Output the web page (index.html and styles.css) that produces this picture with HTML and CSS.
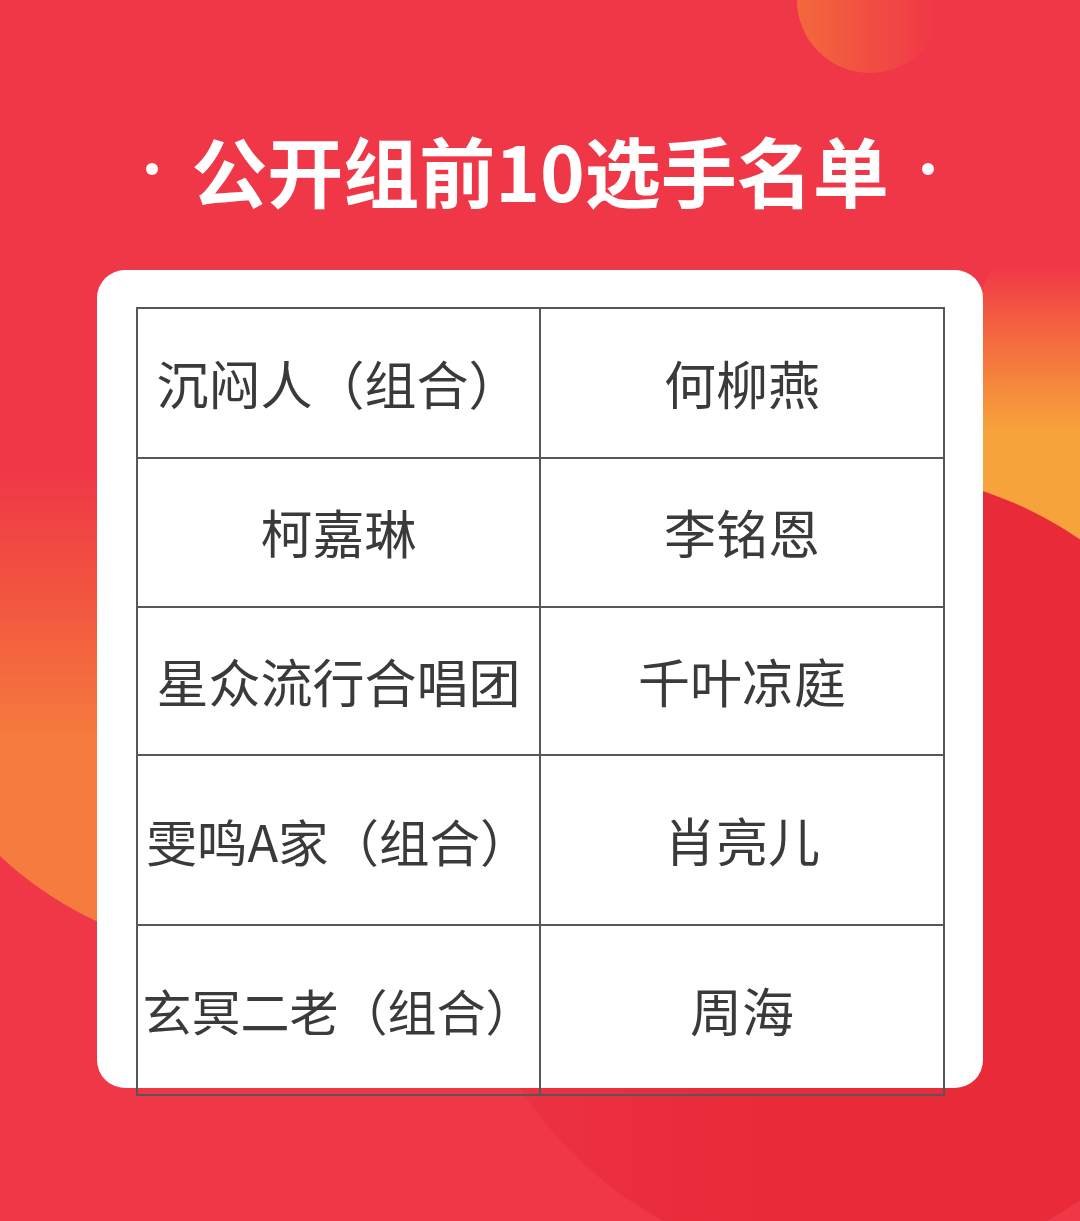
FILE: index.html
```html
<!DOCTYPE html>
<html lang="zh-CN">
<head>
<meta charset="utf-8">
<title>公开组前10选手名单</title>
<link rel="stylesheet" href="styles.css">
</head>
<body>
<div class="page">
  <svg class="bg" width="1080" height="1221" viewBox="0 0 1080 1221" xmlns="http://www.w3.org/2000/svg">
    <defs>
      <linearGradient id="gTop" gradientUnits="userSpaceOnUse" x1="797" y1="0" x2="935" y2="0">
        <stop offset="0" stop-color="#f3683c"/>
        <stop offset="1" stop-color="#f03747"/>
      </linearGradient>
      <linearGradient id="gRight" gradientUnits="userSpaceOnUse" x1="0" y1="265" x2="0" y2="430">
        <stop offset="0" stop-color="#f03747"/>
        <stop offset="0.45" stop-color="#f46a3f"/>
        <stop offset="1" stop-color="#f7a33b"/>
      </linearGradient>
      <linearGradient id="gLeft" gradientUnits="userSpaceOnUse" x1="0" y1="470" x2="0" y2="740">
        <stop offset="0" stop-color="#f03747"/>
        <stop offset="0.5" stop-color="#f2573f"/>
        <stop offset="1" stop-color="#f57c3e"/>
      </linearGradient>
      <linearGradient id="gDark" gradientUnits="userSpaceOnUse" x1="455" y1="0" x2="760" y2="0">
        <stop offset="0" stop-color="#ed3342"/>
        <stop offset="1" stop-color="#e82a39"/>
      </linearGradient>
    </defs>
    <rect width="1080" height="1221" fill="#f03747"/>
    <circle cx="870" cy="0" r="73" fill="url(#gTop)"/>
    <circle cx="1320" cy="440" r="370" fill="url(#gRight)"/>
    <circle cx="250" cy="590" r="365" fill="url(#gLeft)"/>
    <circle cx="855" cy="870" r="400" fill="url(#gDark)"/>
  </svg>

  <div class="content">
    <header class="title">
      <span class="dot"></span>
      <h1 class="title-text">公开组前10选手名单</h1>
      <span class="dot"></span>
    </header>

    <section class="card">
      <table class="list">
        <colgroup>
          <col class="col-l">
          <col class="col-r">
        </colgroup>
        <tbody>
          <tr class="row-a"><td>沉闷人（组合）</td><td>何柳燕</td></tr>
          <tr class="row-b"><td>柯嘉琳</td><td>李铭恩</td></tr>
          <tr class="row-c"><td>星众流行合唱团</td><td>千叶凉庭</td></tr>
          <tr class="row-t"><td class="md">雯鸣A家（组合）</td><td>肖亮儿</td></tr>
          <tr class="row-t"><td class="sm">玄冥二老（组合）</td><td>周海</td></tr>
        </tbody>
      </table>
    </section>
  </div>
</div>
</body>
</html>
```

FILE: styles.css
```css
html, body {
  margin: 0;
  padding: 0;
}

body {
  width: 1080px;
  height: 1221px;
  overflow: hidden;
  font-family: "Noto Sans CJK SC", "Noto Sans", sans-serif;
}

.page {
  position: relative;
  width: 1080px;
  height: 1221px;
  overflow: hidden;
  background: #f03747;
}

.bg {
  position: absolute;
  left: 0;
  top: 0;
  display: block;
}

.content {
  position: relative;
  z-index: 1;
}

.title {
  display: flex;
  justify-content: center;
  align-items: center;
  gap: 33px;
  padding-top: 131px;
  height: 76px;
}

.dot {
  width: 12px;
  height: 12px;
  border-radius: 50%;
  background: #ffffff;
  flex: none;
}

.title-text {
  margin: 0;
  font-family: "Noto Sans CJK SC", sans-serif;
  font-weight: 700;
  font-size: 76px;
  line-height: 76px;
  color: #ffffff;
  white-space: nowrap;
}

.card {
  margin: 63px 0 0 97px;
  width: 886px;
  height: 818px;
  box-sizing: border-box;
  padding: 37px 0 0 39px;
  background: #ffffff;
  border-radius: 28px;
}

.list {
  width: 807px;
  border-collapse: collapse;
  table-layout: fixed;
  border: 2px solid #575757;
}

.col-l {
  width: 403px;
}

.col-r {
  width: 404px;
}

.list td {
  border: 2px solid #575757;
  padding: 0;
  text-align: center;
  vertical-align: middle;
  white-space: nowrap;
  font-size: 52px;
  line-height: 1.2;
  color: #3a3a3a;
}

.list td.md {
  font-size: 50.5px;
}

.list td.sm {
  font-size: 49px;
}

.row-a td {
  height: 148px;
}

.row-b td {
  height: 147px;
}

.row-c td {
  height: 146px;
}

.row-t td {
  height: 168px;
}
```
